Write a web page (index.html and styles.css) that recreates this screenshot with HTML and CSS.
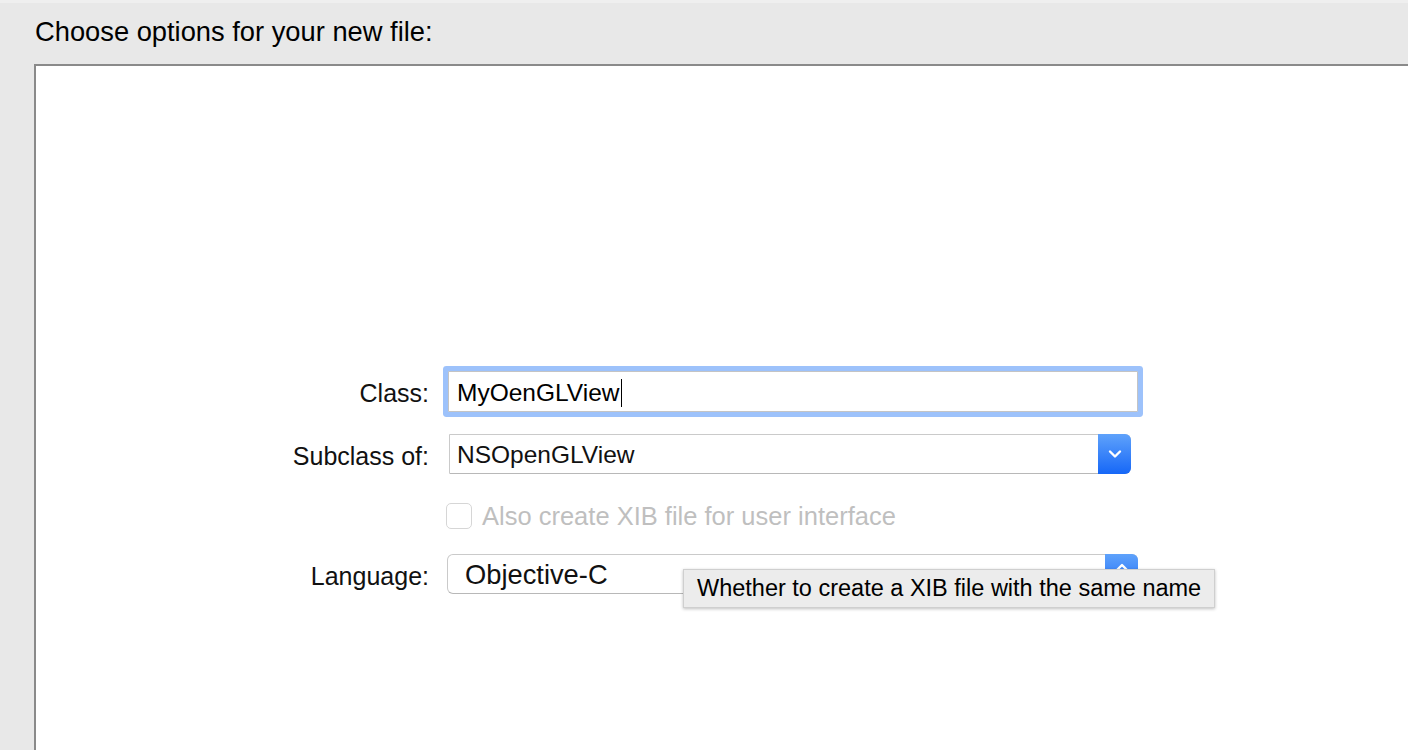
FILE: index.html
```html
<!DOCTYPE html>
<html>
<head>
<meta charset="utf-8">
<link rel="stylesheet" href="styles.css">
</head>
<body>
<div class="window">
  <div class="header">Choose options for your new file:</div>
  <div class="panel">
    <div class="form">
      <div class="row row-class">
        <div class="label">Class:</div>
        <div class="field"><span class="value">MyOenGLView</span><span class="caret"></span></div>
      </div>
      <div class="row row-sub">
        <div class="label">Subclass of:</div>
        <div class="popup popup-sub">
          <span class="value">NSOpenGLView</span>
          <span class="popbtn">
            <svg width="14" height="10" viewBox="0 0 14 10"><path d="M2 2.5 L7 7.5 L12 2.5" fill="none" stroke="#fff" stroke-width="2.4" stroke-linecap="round" stroke-linejoin="round"/></svg>
          </span>
        </div>
      </div>
      <div class="row row-check">
        <div class="spacer"></div>
        <div class="check"><span class="box"></span><span class="check-text">Also create XIB file for user interface</span></div>
      </div>
      <div class="row row-lang">
        <div class="label">Language:</div>
        <div class="popup popup-lang">
          <span class="value">Objective-C</span>
          <span class="popbtn popbtn-lang">
            <svg width="14" height="24" viewBox="0 0 14 24"><path d="M2.5 7.5 L7 3 L11.5 7.5 M2.5 16.5 L7 21 L11.5 16.5" fill="none" stroke="#fff" stroke-width="2.4" stroke-linecap="round" stroke-linejoin="round"/></svg>
          </span>
          <div class="tooltip">Whether to create a XIB file with the same name</div>
        </div>
      </div>
    </div>
  </div>
</div>
</body>
</html>
```

FILE: styles.css
```css
html, body {
  margin: 0;
  padding: 0;
  height: 100%;
  overflow: hidden;
}
body {
  background: #e8e8e8;
  font-family: "Liberation Sans", Arial, sans-serif;
  color: #000;
}
.window {
  border-top: 3px solid #efefef;
  height: 747px;
  display: flex;
  flex-direction: column;
}
.header {
  height: 61px;
  box-sizing: border-box;
  padding-left: 35px;
  padding-top: 14px;
  font-size: 27.3px;
  line-height: 30px;
}
.panel {
  flex: 1;
  margin-left: 34px;
  background: #fff;
  border-left: 2px solid #8a8a8a;
  border-top: 2px solid #8a8a8a;
}
.form {
  padding-top: 305px;
  display: flex;
  flex-direction: column;
}
.row {
  display: flex;
  align-items: center;
}
.label, .spacer {
  width: 393px;
  flex: none;
}
.label {
  text-align: right;
  font-size: 25px;
  line-height: 30px;
  color: #111;
  padding-top: 3px;
}
.row-class .field { margin-left: 19px; }
.row-sub { margin-top: 22px; }
.row-sub .popup { margin-left: 20px; }
.row-check { margin-top: 28px; height: 28px; }
.row-check .check { margin-left: 17px; }
.row-lang { margin-top: 24px; }
.row-lang .popup { margin-left: 18px; }

.field {
  width: 690px;
  height: 41px;
  box-sizing: border-box;
  border: 1px solid #c4c4c4;
  box-shadow: 0 0 0 5px #9dc2fb;
  border-radius: 1px;
  display: flex;
  align-items: center;
  padding-left: 8px;
  padding-top: 2px;
  font-size: 24.5px;
  background: #fff;
}
.caret {
  width: 1.5px;
  height: 28px;
  background: #000;
  margin-left: 1px;
}
.popup {
  position: relative;
  height: 40px;
  box-sizing: border-box;
  border: 1px solid #cacaca;
  border-bottom-color: #b8b8b8;
  display: flex;
  align-items: center;
  background: #fff;
}
.popup-sub {
  width: 682px;
  padding-left: 7px;
  border-radius: 1px 6px 6px 1px;
  font-size: 24.5px;
}
.popup-lang {
  width: 691px;
  padding-left: 17px;
  border-radius: 6px;
  font-size: 27.3px;
}
.popup .value { flex: 1; color: #111; padding-top: 2px; line-height: 32px; }
.popbtn {
  align-self: stretch;
  width: 33px;
  margin: -1px -1px -1px 0;
  background: linear-gradient(#5fa2fb, #1667f7);
  border-radius: 0 6px 6px 0;
  display: flex;
  align-items: center;
  justify-content: center;
}
.check {
  display: flex;
  align-items: center;
  height: 28px;
}
.box {
  width: 26px;
  height: 26px;
  box-sizing: border-box;
  border: 1px solid #d6d6d6;
  border-radius: 5px;
  background: #fff;
}
.check-text {
  margin-left: 10px;
  font-size: 25.5px;
  line-height: 28px;
  color: #bfbfbf;
}
.tooltip {
  position: absolute;
  left: 235px;
  top: 14px;
  width: 532px;
  height: 39px;
  box-sizing: border-box;
  padding-left: 13px;
  background: #ececec;
  border: 1px solid #cfcfcf;
  box-shadow: 0 1px 3px rgba(0,0,0,0.25);
  font-size: 23.5px;
  line-height: 37px;
  color: #000;
  white-space: nowrap;
}
```
